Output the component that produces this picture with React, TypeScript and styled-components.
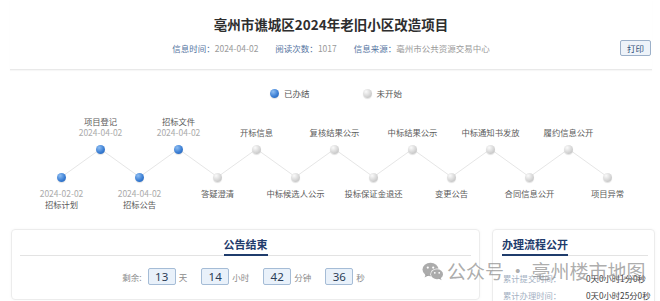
import React, { FC } from 'react'
import styled, { createGlobalStyle } from 'styled-components'

/////////GLOBAL/////////
const GlobalStyle = createGlobalStyle`
	html, body {
		margin: 0;
		padding: 0;
		background: #ffffff;
	}
	body {
		font-family: 'Noto Sans CJK SC', 'Noto Sans', sans-serif;
		color: #333;
	}
`

/////////STYLED/////////
const Page = styled.div`
	position: relative;
	width: 660px;
	height: 301px;
	overflow: hidden;
	background: #fff;
`
const Header = styled.div`
	display: flex;
	flex-direction: column;
	align-items: center;
	padding-top: 14px;
	margin: 0 8px 0 10px;
	height: 55px;
	border-bottom: 1px solid #e9e9e9;
	box-shadow: 0 1px 1px rgba(0, 0, 0, 0.03);
`
const Title = styled.h1`
	margin: 0;
	font-size: 13.5px;
	line-height: 20px;
	font-weight: 700;
	color: #2e2e2e;
	letter-spacing: 0;
`
const MetaRow = styled.div`
	display: grid;
	grid-template-columns: 1fr auto 1fr;
	align-items: center;
	width: 100%;
	margin-top: 6px;
`
const MetaList = styled.div`
	grid-column: 2;
	display: flex;
	gap: 17px;
	font-size: 8.5px;
	line-height: 16px;
	white-space: nowrap;
`
const MetaLabel = styled.span`
	color: #56759f;
`
const MetaValue = styled.span`
	color: #9a9a9a;
`
const PrintButton = styled.button`
	justify-self: end;
	width: 31px;
	height: 16px;
	padding: 0;
	margin-right: 1px;
	font-family: inherit;
	font-size: 8.5px;
	line-height: 14px;
	color: #2f4d78;
	background: #eef3f9;
	border: 1px solid #9cb0c9;
	border-radius: 2px;
`
const Legend = styled.div`
	display: flex;
	justify-content: center;
	gap: 53px;
	padding-left: 12px;
	margin-top: 17px;
	height: 12px;
`
const LegendItem = styled.div`
	display: flex;
	align-items: center;
	gap: 5px;
	font-size: 8.5px;
	line-height: 12px;
	color: #555;
`
const Dot = styled.span<{ $done?: boolean }>`
	display: block;
	width: 9px;
	height: 9px;
	border-radius: 50%;
	flex-shrink: 0;
	background: ${(p) =>
		p.$done
			? 'radial-gradient(circle at 35% 30%, #8dbdf2 0%, #3c7fd4 55%, #1d5bb0 100%)'
			: 'radial-gradient(circle at 35% 30%, #fafafa 0%, #d6d6d6 55%, #b4b4b4 100%)'};
	box-shadow: 0 1px 1px rgba(0, 0, 0, 0.12);
	position: relative;
	z-index: 1;
`
const Timeline = styled.div`
	position: relative;
	display: grid;
	grid-template-columns: repeat(15, 39px);
	margin: 16px 0 0 42px;
	width: 585px;
`
const Lines = styled.svg`
	position: absolute;
	left: 0;
	top: 24px;
	z-index: 0;
`
const Step = styled.div`
	display: flex;
	flex-direction: column;
	align-items: center;
`
const TopSlot = styled.div`
	height: 24px;
	display: flex;
	flex-direction: column;
	justify-content: flex-end;
	align-items: center;
	padding-bottom: 1px;
	box-sizing: border-box;
`
const Track = styled.div<{ $up: boolean }>`
	height: 44px;
	width: 100%;
	box-sizing: border-box;
	display: flex;
	flex-direction: column;
	align-items: center;
	justify-content: ${(p) => (p.$up ? 'flex-start' : 'flex-end')};
	padding: 5.5px 0 1.5px;
`
const BottomSlot = styled.div`
	height: 28px;
	display: flex;
	flex-direction: column;
	align-items: center;
	padding-top: 4.5px;
	box-sizing: border-box;
`
const StepName = styled.span`
	font-size: 8.3px;
	line-height: 11px;
	color: #5a5a5a;
	white-space: nowrap;
`
const StepDate = styled.span`
	font-size: 8.5px;
	line-height: 11px;
	color: #ababab;
	white-space: nowrap;
`
const Cards = styled.div`
	display: flex;
	align-items: flex-start;
	gap: 12px;
	margin: 18px 0 0 11px;
`
const Card = styled.div<{ $width: number; $height: number }>`
	width: ${(p) => p.$width}px;
	height: ${(p) => p.$height}px;
	box-sizing: border-box;
	border: 1px solid #ececec;
	border-radius: 4px;
	box-shadow: 0 0 3px rgba(0, 0, 0, 0.04);
	padding-top: 7px;
`
const CardHead = styled.div<{ $center?: boolean }>`
	display: flex;
	justify-content: ${(p) => (p.$center ? 'center' : 'flex-start')};
	margin: ${(p) => (p.$center ? '0 8px 0 8px' : '0 6px 0 9px')};
	border-bottom: 1px solid #e3e3e3;
`
const CardTitle = styled.span`
	font-size: 11px;
	line-height: 14px;
	font-weight: 700;
	color: #1f3c6c;
	padding-bottom: 3px;
	border-bottom: 2px solid #1f3c6c;
	margin-bottom: -1px;
`
const Countdown = styled.div`
	display: flex;
	justify-content: center;
	align-items: center;
	margin-top: 12px;
	padding-right: 4px;
`
const CountLabel = styled.span`
	font-size: 8.5px;
	color: #8a8a8a;
	margin-right: 6px;
`
const CountBox = styled.span`
	display: inline-flex;
	align-items: center;
	justify-content: center;
	width: 28px;
	height: 17px;
	box-sizing: border-box;
	background: #e9f1fa;
	border: 1px solid #a5bcd6;
	border-radius: 2px;
	font-family: 'Noto Sans', 'Noto Sans CJK SC', sans-serif;
	font-size: 11.5px;
	color: #2a3c55;
`
const CountUnit = styled.span`
	font-size: 8.5px;
	color: #8a8a8a;
	margin: 0 14px 0 3px;
	&:last-child {
		margin-right: 0;
	}
`
const FlowRows = styled.div`
	display: flex;
	flex-direction: column;
	margin: 14px 0 0 10px;
`
const FlowRow = styled.div`
	display: flex;
	font-size: 8.3px;
	line-height: 17px;
	white-space: nowrap;
`
const FlowLabel = styled.span`
	width: 83px;
	color: #a3b0c2;
`
const FlowValue = styled.span`
	color: #3c3c3c;
`
const Watermark = styled.div`
	position: absolute;
	left: 422px;
	top: 259px;
	display: flex;
	align-items: center;
	gap: 3px;
	font-size: 19px;
	line-height: 24px;
	color: rgba(120, 120, 120, 0.62);
	white-space: nowrap;
	pointer-events: none;
	z-index: 5;
`

/////////DATA/////////
type StepItem = { name: string; date?: string; done: boolean }

const steps: StepItem[] = [
	{ name: '招标计划', date: '2024-02-02', done: true },
	{ name: '项目登记', date: '2024-04-02', done: true },
	{ name: '招标公告', date: '2024-04-02', done: true },
	{ name: '招标文件', date: '2024-04-02', done: true },
	{ name: '答疑澄清', done: false },
	{ name: '开标信息', done: false },
	{ name: '中标候选人公示', done: false },
	{ name: '复核结果公示', done: false },
	{ name: '投标保证金退还', done: false },
	{ name: '中标结果公示', done: false },
	{ name: '变更公告', done: false },
	{ name: '中标通知书发放', done: false },
	{ name: '合同信息公开', done: false },
	{ name: '履约信息公开', done: false },
	{ name: '项目异常', done: false },
]

const countdown = [
	{ value: 13, unit: '天' },
	{ value: 14, unit: '小时' },
	{ value: 42, unit: '分钟' },
	{ value: 36, unit: '秒' },
]

const WeChatIcon: FC = () => (
	<svg width="22" height="19" viewBox="0 0 22 19">
		<ellipse cx="8.5" cy="7.5" rx="8" ry="6.8" fill="rgba(120,120,120,0.62)" />
		<path d="M3.5 12.5 L2.6 15.6 L6.4 13.6 Z" fill="rgba(120,120,120,0.62)" />
		<circle cx="5.8" cy="5.6" r="1.1" fill="#fff" />
		<circle cx="11.2" cy="5.6" r="1.1" fill="#fff" />
		<ellipse cx="15" cy="12.2" rx="6.6" ry="5.6" fill="#fff" />
		<ellipse cx="15" cy="12.2" rx="6" ry="5" fill="rgba(120,120,120,0.62)" />
		<path d="M18.6 15.8 L19.6 18.2 L16.6 16.6 Z" fill="rgba(120,120,120,0.62)" />
		<circle cx="12.8" cy="10.8" r="0.9" fill="#fff" />
		<circle cx="17.2" cy="10.8" r="0.9" fill="#fff" />
	</svg>
)

const App: FC = () => {
	const points = steps.map((_s, i) => `${19.5 + i * 39},${i % 2 === 1 ? 10 : 38}`).join(' ')

	return (
		<Page>
			<GlobalStyle />
			<Header>
				<Title>亳州市谯城区2024年老旧小区改造项目</Title>
				<MetaRow>
					<MetaList>
						<span>
							<MetaLabel>信息时间：</MetaLabel>
							<MetaValue>2024-04-02</MetaValue>
						</span>
						<span>
							<MetaLabel>阅读次数：</MetaLabel>
							<MetaValue>1017</MetaValue>
						</span>
						<span>
							<MetaLabel>信息来源：</MetaLabel>
							<MetaValue>亳州市公共资源交易中心</MetaValue>
						</span>
					</MetaList>
					<PrintButton>打印</PrintButton>
				</MetaRow>
			</Header>

			<Legend>
				<LegendItem>
					<Dot $done />
					已办结
				</LegendItem>
				<LegendItem>
					<Dot />
					未开始
				</LegendItem>
			</Legend>

			<Timeline>
				<Lines width="585" height="44" viewBox="0 0 585 44">
					<polyline points={points} fill="none" stroke="#e6e6e6" strokeWidth="1" />
				</Lines>
				{steps.map((s, i) => {
					const up = i % 2 === 1
					return (
						<Step key={s.name}>
							<TopSlot>
								{up && <StepName>{s.name}</StepName>}
								{up && s.date && <StepDate>{s.date}</StepDate>}
							</TopSlot>
							<Track $up={up}>
								<Dot $done={s.done} />
							</Track>
							<BottomSlot>
								{!up && s.date && <StepDate>{s.date}</StepDate>}
								{!up && <StepName>{s.name}</StepName>}
							</BottomSlot>
						</Step>
					)
				})}
			</Timeline>

			<Cards>
				<Card $width={469} $height={71}>
					<CardHead $center>
						<CardTitle>公告结束</CardTitle>
					</CardHead>
					<Countdown>
						<CountLabel>剩余:</CountLabel>
						{countdown.map((c) => (
							<React.Fragment key={c.unit}>
								<CountBox>{c.value}</CountBox>
								<CountUnit>{c.unit}</CountUnit>
							</React.Fragment>
						))}
					</Countdown>
				</Card>
				<Card $width={163} $height={90}>
					<CardHead>
						<CardTitle>办理流程公开</CardTitle>
					</CardHead>
					<FlowRows>
						<FlowRow>
							<FlowLabel>累计提交时间：</FlowLabel>
							<FlowValue>0天0小时1分0秒</FlowValue>
						</FlowRow>
						<FlowRow>
							<FlowLabel>累计办理时间：</FlowLabel>
							<FlowValue>0天0小时25分0秒</FlowValue>
						</FlowRow>
					</FlowRows>
				</Card>
			</Cards>

			<Watermark>
				<WeChatIcon />
				<span>公众号 · 亳州楼市地图</span>
			</Watermark>
		</Page>
	)
}

export default App
